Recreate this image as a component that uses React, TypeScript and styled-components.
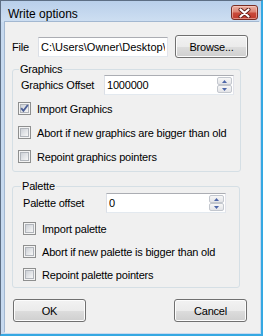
import React from "react";
import styled, { createGlobalStyle } from "styled-components";

const GlobalStyle = createGlobalStyle`
  html, body {
    margin: 0;
    padding: 0;
    overflow: hidden;
  }
  body {
    font-family: "Liberation Sans", Arial, sans-serif;
  }
`;

const Window = styled.div`
  box-sizing: border-box;
  width: 263px;
  height: 336px;
  display: flex;
  flex-direction: column;
  border-style: solid;
  border-width: 1px 2px 2px 1px;
  border-color: #5d6e84 #35a8e2 #35a8e2 #5d6e84;
  background: #c6d9ef;
`;

const TitleBar = styled.div`
  height: 21px;
  flex-shrink: 0;
  display: flex;
  align-items: flex-start;
  justify-content: space-between;
  padding: 0 3px 0 7px;
  background: linear-gradient(to bottom, #b9cfea, #cedff2);
`;

const Title = styled.span`
  margin-top: 7px;
  font-size: 12px;
  line-height: 12px;
  color: #000;
`;

const CloseButton = styled.div`
  box-sizing: border-box;
  margin-top: 4px;
  width: 27px;
  height: 15px;
  display: flex;
  align-items: center;
  justify-content: center;
  border: 1px solid #7a2d24;
  border-radius: 3px;
  background: linear-gradient(
    to bottom,
    #eab0a4 0%,
    #dd8474 45%,
    #c9493a 55%,
    #c0392b 100%
  );
  box-shadow: inset 0 0 0 1px rgba(255, 220, 210, 0.5);
`;

const Client = styled.div`
  flex: 1;
  margin: 0 1px 1px 4px;
  display: flex;
  flex-direction: column;
  background: #f0f0f0;
  box-shadow: -1px -1px 0 #a3b8d1;
  font-size: 11px;
  letter-spacing: -0.2px;
  color: #000;
`;

const FileRow = styled.div`
  display: flex;
  align-items: center;
  height: 23px;
  margin-top: 13px;
  padding-left: 7px;
`;

const FieldLabel = styled.span<{ $width: number }>`
  width: ${(p) => p.$width}px;
  flex-shrink: 0;
  white-space: nowrap;
`;

const TextBox = styled.input`
  box-sizing: border-box;
  width: 130px;
  height: 20px;
  padding: 0 2px;
  border: 1px solid;
  border-color: #abadb3 #e2e3ea #e3e9ef #dbdfe6;
  background: #fff;
  font: inherit;
  letter-spacing: 0;
  color: #000;
  outline: none;
`;

const Button = styled.button<{ $left?: number }>`
  box-sizing: border-box;
  width: 73px;
  height: 23px;
  margin-left: ${(p) => p.$left ?? 0}px;
  padding: 0;
  border: 1px solid #707070;
  border-radius: 3px;
  background: linear-gradient(
    to bottom,
    #f2f2f2 0%,
    #ebebeb 50%,
    #dddddd 51%,
    #cfcfcf 100%
  );
  box-shadow: inset 0 0 0 1px #fcfcfc;
  font: inherit;
  letter-spacing: inherit;
  color: #000;
`;

const Group = styled.fieldset<{ $width: number; $top: number }>`
  box-sizing: border-box;
  width: ${(p) => p.$width}px;
  min-width: 0;
  margin: ${(p) => p.$top}px 0 0 7px;
  padding: 0;
  border: 1px solid #d5dfe5;
  border-radius: 3px;
`;

const Legend = styled.legend<{ $left: number }>`
  margin-left: ${(p) => p.$left}px;
  padding: 0 1px;
  font-size: 11px;
  line-height: 12px;
`;

const OffsetRow = styled.div<{ $indent: number; $top: number }>`
  display: flex;
  align-items: center;
  height: 20px;
  margin-top: ${(p) => p.$top}px;
  padding-left: ${(p) => p.$indent}px;
`;

const SpinBox = styled.div<{ $width: number }>`
  box-sizing: border-box;
  width: ${(p) => p.$width}px;
  height: 20px;
  display: flex;
  border: 1px solid;
  border-color: #abadb3 #e2e3ea #e3e9ef #dbdfe6;
  background: #fff;
`;

const SpinInput = styled.input`
  flex: 1;
  min-width: 0;
  padding: 0 2px;
  border: none;
  background: transparent;
  font: inherit;
  letter-spacing: inherit;
  color: #000;
  outline: none;
`;

const Spinner = styled.div`
  width: 15px;
  padding: 1px 1px 1px 0;
  display: flex;
  flex-direction: column;
`;

const SpinButton = styled.div`
  flex: 1;
  display: flex;
  align-items: center;
  justify-content: center;
  border: 1px solid #c3c7ce;
  border-radius: 2px;
  background: linear-gradient(to bottom, #f7f7f7, #e3e4e8);
`;

const CheckList = styled.div<{ $indent: number; $top: number; $gap: number; $bottom: number }>`
  display: flex;
  flex-direction: column;
  gap: ${(p) => p.$gap}px;
  margin-top: ${(p) => p.$top}px;
  padding: 0 0 ${(p) => p.$bottom}px ${(p) => p.$indent}px;
`;

const CheckRow = styled.label`
  display: flex;
  align-items: center;
  gap: 6px;
  height: 17px;
  white-space: nowrap;
`;

const Box = styled.span`
  position: relative;
  box-sizing: border-box;
  width: 13px;
  height: 13px;
  flex-shrink: 0;
  border: 1px solid #8e8f8f;
  background: #f4f4f4;
  &::before {
    content: "";
    position: absolute;
    inset: 1px;
    border: 1px solid #b1b5bb;
    background: linear-gradient(135deg, #cdd1d7, #f7f7f7);
  }
  svg {
    position: absolute;
    left: 0;
    top: 0;
  }
`;

const ButtonRow = styled.div`
  display: flex;
  justify-content: space-between;
  margin-top: 11px;
  padding: 0 13px 0 8px;
`;

const CheckBox: React.FC<{ checked?: boolean; label: string }> = ({ checked, label }) => (
  <CheckRow>
    <Box>
      {checked && (
        <svg width="11" height="11" viewBox="0 0 11 11">
          <path d="M2.2 5.2 L4.4 7.8 L8.8 2" fill="none" stroke="#4b5e96" strokeWidth="1.8" />
        </svg>
      )}
    </Box>
    {label}
  </CheckRow>
);

const Spin: React.FC<{ value: string; width: number }> = ({ value, width }) => (
  <SpinBox $width={width}>
    <SpinInput readOnly value={value} />
    <Spinner>
      <SpinButton>
        <svg width="5" height="3" viewBox="0 0 5 3">
          <path d="M0 3 L2.5 0 L5 3 Z" fill="#4d66a8" />
        </svg>
      </SpinButton>
      <SpinButton>
        <svg width="5" height="3" viewBox="0 0 5 3">
          <path d="M0 0 L2.5 3 L5 0 Z" fill="#4d66a8" />
        </svg>
      </SpinButton>
    </Spinner>
  </SpinBox>
);

const App: React.FC = () => {
  return (
    <>
      <GlobalStyle />
      <Window>
        <TitleBar>
          <Title>Write options</Title>
          <CloseButton>
            <svg width="13" height="10" viewBox="0 0 13 10">
              <path d="M2.5 1.5 L10.5 8.5 M10.5 1.5 L2.5 8.5" stroke="#5e1d16" strokeWidth="4" strokeLinecap="round" />
              <path d="M2.5 1.5 L10.5 8.5 M10.5 1.5 L2.5 8.5" stroke="#fff" strokeWidth="2.2" strokeLinecap="round" />
            </svg>
          </CloseButton>
        </TitleBar>
        <Client>
          <FileRow>
            <FieldLabel $width={26}>File</FieldLabel>
            <TextBox readOnly value={"C:\\Users\\Owner\\Desktop\\hack.gba"} />
            <Button $left={7}>Browse...</Button>
          </FileRow>

          <Group $width={229} $top={5}>
            <Legend $left={6}>Graphics</Legend>
            <OffsetRow $indent={8} $top={0}>
              <FieldLabel $width={83}>Graphics Offset</FieldLabel>
              <Spin value="1000000" width={130} />
            </OffsetRow>
            <CheckList $indent={5} $top={5} $gap={7} $bottom={6}>
              <CheckBox checked label="Import Graphics" />
              <CheckBox label="Abort if new graphics are bigger than old" />
              <CheckBox label="Repoint graphics pointers" />
            </CheckList>
          </Group>

          <Group $width={228} $top={8}>
            <Legend $left={8}>Palette</Legend>
            <OffsetRow $indent={10} $top={1}>
              <FieldLabel $width={83}>Palette offset</FieldLabel>
              <Spin value="0" width={120} />
            </OffsetRow>
            <CheckList $indent={10} $top={7} $gap={6} $bottom={4}>
              <CheckBox label="Import palette" />
              <CheckBox label="Abort if new palette is bigger than old" />
              <CheckBox label="Repoint palette pointers" />
            </CheckList>
          </Group>

          <ButtonRow>
            <Button>OK</Button>
            <Button>Cancel</Button>
          </ButtonRow>
        </Client>
      </Window>
    </>
  );
};

export default App;
